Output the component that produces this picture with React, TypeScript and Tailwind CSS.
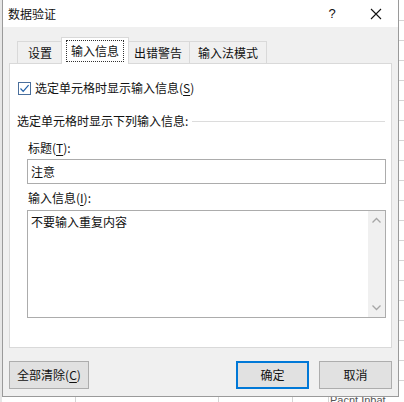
import React from "react";

const font = { fontFamily: '"Noto Sans CJK SC", "Noto Sans", sans-serif' };

function U({ c }: { c: string }) {
  return <span className="underline underline-offset-2">{c}</span>;
}

function Chevron({ up }: { up?: boolean }) {
  return (
    <svg width="9" height="6" viewBox="0 0 9 6" className="block">
      <path
        d={up ? "M0.5 5.5 L4.5 1.5 L8.5 5.5" : "M0.5 0.5 L4.5 4.5 L8.5 0.5"}
        fill="none"
        stroke="#a6a6a6"
        strokeWidth="1.3"
      />
    </svg>
  );
}

export default function App() {
  return (
    <div
      className="relative w-[404px] h-[402px] bg-white overflow-hidden text-[12px] text-[#111]"
      style={font}
    >
      {/* spreadsheet behind */}
      <svg className="absolute inset-0" width="404" height="402">
        <rect x="0" y="0" width="2" height="402" fill="#e6e6e6" />
        {[20, 40, 60, 80, 100, 120, 140, 160, 180, 200, 220, 240, 260, 280, 300, 320, 340, 360, 380].map((y) => (
          <line key={y} x1="399" y1={y + 0.5} x2="404" y2={y + 0.5} stroke="#d4d4d4" />
        ))}
        {[75, 218, 292, 328].map((x) => (
          <line key={x} x1={x + 0.5} y1="396" x2={x + 0.5} y2="402" stroke="#d4d4d4" />
        ))}
      </svg>
      <div className="absolute left-[330px] top-[395px] text-[11px] text-[#555] leading-none" style={{ fontFamily: '"Liberation Sans", sans-serif' }}>
        Pacnt Inbat
      </div>

      {/* dialog window */}
      <div className="absolute left-[2px] top-[-1px] w-[397px] h-[398px] border border-[#9a9a9a] bg-[#f0f0f0] flex flex-col">
        {/* title bar */}
        <div className="h-[27px] bg-white flex items-center shrink-0">
          <div className="pl-[5px] flex-1 leading-none">数据验证</div>
          <div className="w-[20px] text-center text-[13px] mr-[28px]" style={{ fontFamily: '"Liberation Sans", sans-serif' }}>?</div>
          <svg width="12" height="12" viewBox="0 0 12 12" className="mr-[16px]">
            <path d="M1 1 L11 11 M11 1 L1 11" stroke="#111" strokeWidth="1.1" />
          </svg>
        </div>

        {/* body */}
        <div className="flex-1 flex flex-col px-[6px]">
          {/* tabs */}
          <div className="h-[36px] flex items-end pl-[8px] relative z-10">
            <div className="h-[22px] w-[46px] border border-b-0 border-[#d9d9d9] bg-[#f0f0f0] flex items-center justify-center">
              设置
            </div>
            <div className="h-[27px] w-[68px] border border-b-0 border-[#d9d9d9] bg-white -mx-[2px] -mb-px flex items-center justify-center relative z-10">
              <div className="h-[22px] w-[58px] border border-dotted border-[#333] flex items-center justify-center">
                输入信息
              </div>
            </div>
            <div className="h-[22px] w-[63px] border border-b-0 border-l-0 border-[#d9d9d9] bg-[#f0f0f0] flex items-center justify-center">
              出错警告
            </div>
            <div className="h-[22px] w-[77px] border border-b-0 border-l-0 border-[#d9d9d9] bg-[#f0f0f0] flex items-center justify-center">
              输入法模式
            </div>
          </div>

          {/* panel */}
          <div className="h-[285px] bg-white border border-[#d9d9d9] flex flex-col">
            <div className="mt-[17px] pl-[8px] flex items-center h-[14px]">
              <div className="w-[13px] h-[13px] border border-[#4a6f9c] bg-white flex items-center justify-center">
                <svg width="11" height="11" viewBox="0 0 11 11">
                  <path d="M1.5 5.5 L4.2 8.3 L9.6 2.2" fill="none" stroke="#1f5fa8" strokeWidth="1.2" />
                </svg>
              </div>
              <div className="ml-[4px] leading-none">
                选定单元格时显示输入信息(<U c="S" />)
              </div>
            </div>

            <div className="mt-[18px] pl-[7px] pr-[6px] flex items-center h-[16px]">
              <div className="leading-none whitespace-nowrap">选定单元格时显示下列输入信息:</div>
              <div className="flex-1 h-px bg-[#dcdcdc] ml-[4px]" />
            </div>

            <div className="mt-[11px] pl-[18px] h-[16px] flex items-center leading-none">
              标题(<U c="T" />):
            </div>
            <div className="mt-[3px] ml-[17px] w-[359px] h-[25px] border border-[#acacac] flex items-center pl-[3px] leading-none">
              注意
            </div>

            <div className="mt-[6px] pl-[18px] h-[16px] flex items-center leading-none">
              输入信息(<U c="I" />):
            </div>
            <div className="mt-[4px] ml-[17px] w-[359px] h-[108px] border border-[#acacac] flex">
              <div className="flex-1 pl-[3px] pt-[3px] leading-[16px]">不要输入重复内容</div>
              <div className="w-[17px] bg-[#f0f0f0] flex flex-col items-center justify-between py-[6px]">
                <Chevron up />
                <Chevron />
              </div>
            </div>
          </div>

          {/* buttons */}
          <div className="mt-[13px] flex items-start">
            <div className="w-[80px] h-[28px] bg-[#e1e1e1] border border-[#adadad] flex items-center justify-center leading-none">
              全部清除(<U c="C" />)
            </div>
            <div className="flex-1" />
            <div className="w-[73px] h-[28px] bg-[#e1e1e1] border-2 border-[#0078d7] flex items-center justify-center leading-none">
              确定
            </div>
            <div className="ml-[10px] w-[73px] h-[28px] bg-[#e1e1e1] border border-[#adadad] flex items-center justify-center leading-none">
              取消
            </div>
          </div>
        </div>
      </div>
    </div>
  );
}
